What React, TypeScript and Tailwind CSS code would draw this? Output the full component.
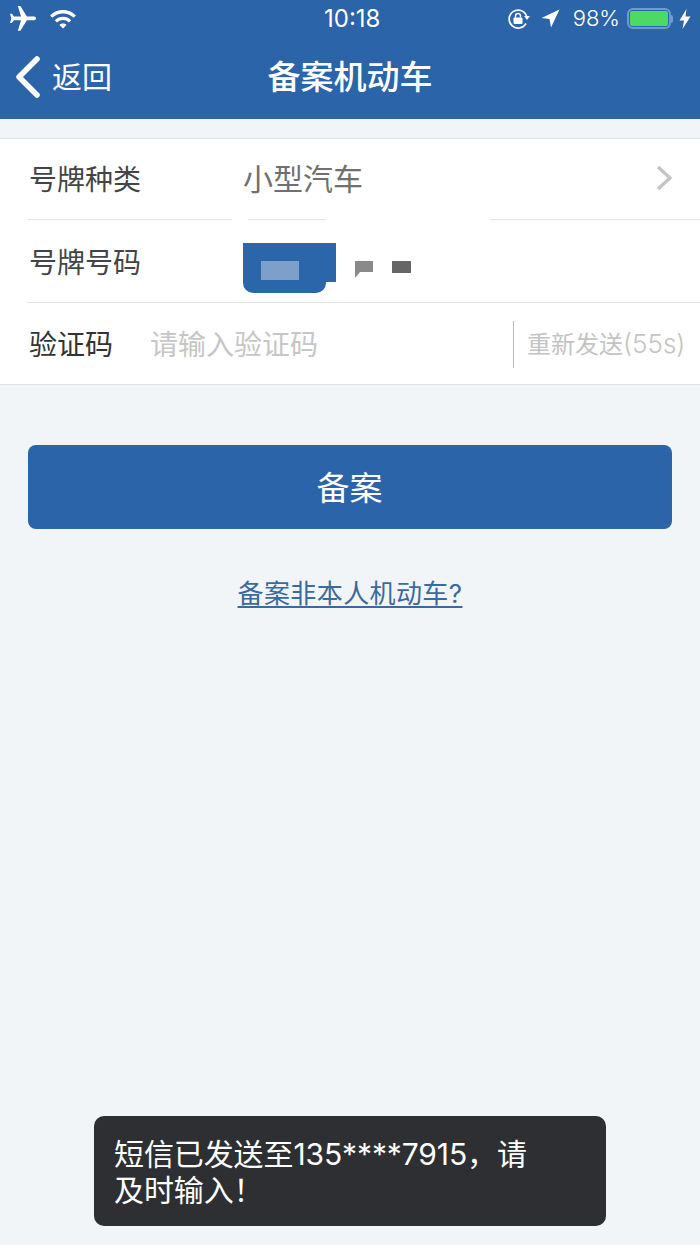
import React from "react";

const FONT = "font-['Inter','Noto_Sans_CJK_SC',sans-serif]";

function StatusBar() {
  return (
    <div className="h-[37px] pl-[10px] pr-[9px] flex items-center text-white">
      <div className="flex items-center flex-1">
        <svg width="26" height="26" viewBox="2 2 20 20" fill="white" className="rotate-90">
          <path d="M21 16v-2l-8-5V3.5c0-.83-.67-1.5-1.5-1.5S10 2.67 10 3.5V9l-8 5v2l8-2.5V19l-2 1.5V22l3.5-1 3.5 1v-1.5L13 19v-5.5l8 2.5z" />
        </svg>
        <svg width="26" height="20" viewBox="1 4 22 16" fill="white" className="ml-[14px]">
          <path d="M1 9l2 2c4.97-4.97 13.03-4.97 18 0l2-2C16.93 2.93 7.08 2.93 1 9zm8 8l3 3 3-3c-1.65-1.66-4.34-1.66-6 0zm-4-4l2 2c2.76-2.76 7.24-2.76 10 0l2-2C15.14 9.14 8.87 9.14 5 13z" />
        </svg>
      </div>
      <span className="text-[24px] leading-[37px] absolute left-[324px]">10:18</span>
      <div className="flex items-center">
        <svg width="23" height="22" viewBox="0 0 23 22" fill="none">
          <path d="M19 15.500A9 9 0 1 1 19.600 8" stroke="white" strokeWidth="1.700" />
          <path d="M17 8h6l-3 4z" fill="white" />
          <rect x="6.500" y="9.500" width="9" height="6.500" rx="1" fill="white" />
          <path d="M8.500 9.500V8a2.500 2.500 0 0 1 5 0v1.500" stroke="white" strokeWidth="1.400" />
        </svg>
        <svg width="19" height="19" viewBox="0 0 19 19" fill="white" className="ml-[11px]">
          <path d="M18.500 0.500L0.500 9L8.500 10L10 18.500z" />
        </svg>
        <span className="text-[22px] leading-[37px] ml-[13px] font-light">98%</span>
        <div className="ml-[7px] w-[44px] h-[21px] rounded-[6px] border-[2.5px] border-[#6f9bd0] p-[1px] flex">
          <div className="w-full h-full rounded-[2px] bg-[#4cd964]" />
        </div>
        <div className="w-[2px] h-[8px] bg-[#6f9bd0] rounded-r-sm" />
        <svg width="12" height="20" viewBox="0 0 12 20" fill="white" className="ml-[6px]">
          <path d="M7.500 0L0.500 11.500H5L3.500 20L11.500 7.500H6.500z" />
        </svg>
      </div>
    </div>
  );
}

function NavBar() {
  return (
    <div className="h-[82px] pb-[2px] flex items-center relative text-white">
      <div className="flex items-center pl-[15px]">
        <svg width="26" height="42" viewBox="0 0 26 42" fill="none">
          <path d="M22 3L4 21l18 18" stroke="white" strokeWidth="5.500" strokeLinecap="round" strokeLinejoin="round" />
        </svg>
        <span className="text-[30px] leading-[40px] ml-[11px]">返回</span>
      </div>
      <span className="absolute left-0 right-0 text-center text-[33px] leading-[44px] font-medium">备案机动车</span>
    </div>
  );
}

function LicenseRow() {
  return (
    <div className="h-[82px] flex">
      <span className="pl-[29px] w-[243px] pt-[24px] text-[28px] leading-[38px] text-[#444444]">号牌号码</span>
      <div className="pt-[23px] flex items-start">
        <div className="w-[93px] h-[50px] flex flex-col">
          <div className="h-[39px] bg-[#2b65aa] pl-[18px] pt-[18px]">
            <div className="w-[38px] h-[19px] bg-[#7d9fca]" />
          </div>
          <div className="h-[11px] w-[83px] bg-[#2b65aa] rounded-b-[10px]" />
        </div>
        <svg width="18" height="17" viewBox="0 0 18 17" fill="#8a8a8a" className="ml-[19px] mt-[18px]">
          <path d="M0 0H18V11H5L0 17z" />
        </svg>
        <div className="ml-[19px] mt-[18px] w-[19px] h-[12px] bg-[#666666]" />
      </div>
    </div>
  );
}

export default function App() {
  return (
    <div className={`${FONT} relative w-[700px] h-[1245px] overflow-hidden bg-[#f2f5f8]`}>
      <header className="bg-[#2b64a8] h-[119px]">
        <StatusBar />
        <NavBar />
      </header>

      <section className="mt-[19px] bg-white border-y border-[#e0e2e5]">
        <div className="h-[80px] flex items-center relative">
          <span className="pl-[29px] pt-[2px] w-[243px] text-[28px] leading-[38px] text-[#444444]">号牌种类</span>
          <span className="text-[30px] leading-[40px] text-[#707070] flex-1">小型汽车</span>
          <svg width="17" height="26" viewBox="0 0 17 26" fill="none" className="mr-[27px] mb-[2px]">
            <path d="M2 2l12 11L2 24" stroke="#c4c4c4" strokeWidth="3.400" />
          </svg>
        </div>
        <div className="flex h-[1px]">
          <div className="ml-[28px] w-[204px] bg-[#e3e4e6]" />
          <div className="ml-[16px] w-[78px] bg-[#e3e4e6]" />
          <div className="ml-[164px] flex-1 bg-[#e3e4e6]" />
        </div>
        <LicenseRow />
        <div className="ml-[27px] h-[1px] bg-[#e3e4e6]" />
        <div className="h-[81px] pt-[2px] flex items-center">
          <span className="pl-[29px] w-[150px] text-[28px] leading-[38px] text-[#333333]">验证码</span>
          <span className="text-[28px] leading-[38px] text-[#c6c6c6] w-[363px]">请输入验证码</span>
          <div className="w-[1px] h-[47px] bg-[#b9b9b9]" />
          <span className="ml-[13px] text-[24px] leading-[32px] text-[#c4c4c4] whitespace-nowrap">
            重新发送<span className="text-[26px] font-light">(55s)</span>
          </span>
        </div>
      </section>

      <div className="px-[28px] mt-[60px]">
        <button className="w-full h-[84px] rounded-[8px] bg-[#2b64a8] text-white text-[33px] leading-[44px] pr-[1px] pt-[2px]">备案</button>
      </div>
      <div className="mt-[46px] text-center">
        <span className="text-[26px] leading-[38px] text-[#3a6a9e] underline underline-offset-[3px] tracking-[0.400px]">备案非本人机动车?</span>
      </div>

      <div className="absolute left-[94px] top-[1116px] w-[512px] h-[110px] rounded-[10px] bg-[#2e2f32] px-[20px] pt-[20px] text-white text-[30px] leading-[36px] tracking-[-0.100px]">
        <p>短信已发送至135****7915，请</p>
        <p>及时输入！</p>
      </div>
    </div>
  );
}
